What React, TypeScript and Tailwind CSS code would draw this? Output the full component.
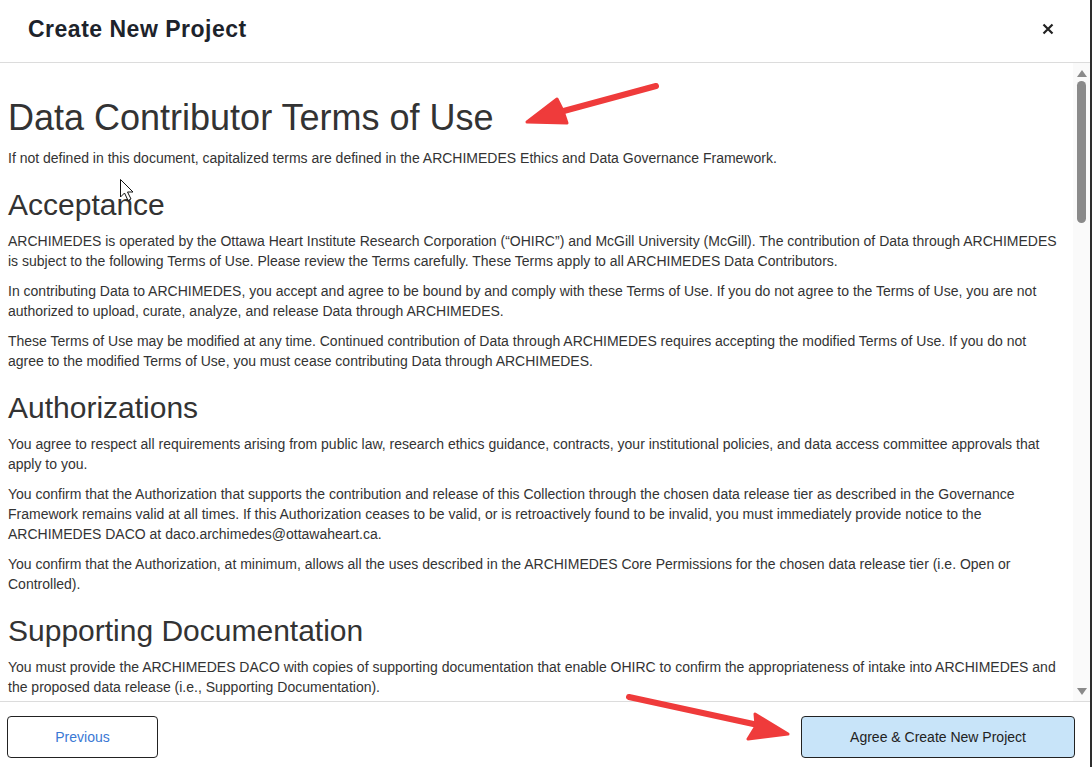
import React from "react";

const sections = [
  {
    title: "Acceptance",
    paragraphs: [
      "ARCHIMEDES is operated by the Ottawa Heart Institute Research Corporation (“OHIRC”) and McGill University (McGill). The contribution of Data through ARCHIMEDES is subject to the following Terms of Use. Please review the Terms carefully. These Terms apply to all ARCHIMEDES Data Contributors.",
      "In contributing Data to ARCHIMEDES, you accept and agree to be bound by and comply with these Terms of Use. If you do not agree to the Terms of Use, you are not authorized to upload, curate, analyze, and release Data through ARCHIMEDES.",
      "These Terms of Use may be modified at any time. Continued contribution of Data through ARCHIMEDES requires accepting the modified Terms of Use. If you do not agree to the modified Terms of Use, you must cease contributing Data through ARCHIMEDES.",
    ],
  },
  {
    title: "Authorizations",
    paragraphs: [
      "You agree to respect all requirements arising from public law, research ethics guidance, contracts, your institutional policies, and data access committee approvals that apply to you.",
      "You confirm that the Authorization that supports the contribution and release of this Collection through the chosen data release tier as described in the Governance Framework remains valid at all times. If this Authorization ceases to be valid, or is retroactively found to be invalid, you must immediately provide notice to the ARCHIMEDES DACO at daco.archimedes@ottawaheart.ca.",
      "You confirm that the Authorization, at minimum, allows all the uses described in the ARCHIMEDES Core Permissions for the chosen data release tier (i.e. Open or Controlled).",
    ],
  },
  {
    title: "Supporting Documentation",
    paragraphs: [
      "You must provide the ARCHIMEDES DACO with copies of supporting documentation that enable OHIRC to confirm the appropriateness of intake into ARCHIMEDES and the proposed data release (i.e., Supporting Documentation).",
    ],
  },
];

function Scrollbar() {
  return (
    <div className="w-[17px] shrink-0 bg-[#fafafa] flex flex-col items-center pt-[7px] pb-[6px]">
      <svg width="10" height="7" viewBox="0 0 10 7">
        <polygon points="5,0 10,7 0,7" fill="#8a8a8a" />
      </svg>
      <div className="mt-[4px] w-[9px] h-[142px] rounded-full bg-[#8a8a8a]" />
      <div className="flex-1" />
      <svg width="10" height="7" viewBox="0 0 10 7">
        <polygon points="0,0 10,0 5,7" fill="#8a8a8a" />
      </svg>
    </div>
  );
}

function Annotations() {
  return (
    <svg
      className="absolute inset-0 pointer-events-none"
      width="1092"
      height="767"
      viewBox="0 0 1092 767"
    >
      <g fill="#ef3b3b" stroke="#ef3b3b" strokeLinejoin="round" strokeLinecap="round">
        <line x1="656" y1="86" x2="560" y2="112" strokeWidth="6" />
        <polygon points="527,122 557,99 563,111 567,123" strokeWidth="3" />
        <line x1="629" y1="697" x2="758" y2="725" strokeWidth="6" />
        <polygon points="788,734 755,714 756,726 748,739" strokeWidth="3" />
      </g>
      <polygon
        points="120.5,179.5 120.5,197 124.5,193 128,200.5 131,199 127.5,192 133,192"
        fill="#fff"
        stroke="#111"
        strokeWidth="1"
        strokeLinejoin="round"
      />
    </svg>
  );
}

export default function App() {
  return (
    <div className="relative flex h-[767px] w-full bg-white text-[#333] font-['Liberation_Sans',Arial,sans-serif] overflow-hidden">
      <div className="flex-1 flex flex-col min-w-0">
        <div className="h-[63px] shrink-0 border-b border-[#dcdcdc] flex items-center justify-between pl-7 pr-9 pb-1">
          <h3 className="text-[23px] tracking-[0.5px] font-bold text-[#1d232b]">Create New Project</h3>
          <button className="text-[#222]">
            <svg width="12" height="12" viewBox="0 0 12 12">
              <path d="M1.5 1.5L10.5 10.5M10.5 1.5L1.5 10.5" stroke="#222" strokeWidth="2.2" />
            </svg>
          </button>
        </div>

        <div className="flex-1 flex min-h-0">
          <div className="flex-1 overflow-hidden px-2 pt-[15px] text-[14px] leading-[20px]">
            <h1 className="mt-5 mb-2.5 text-[36px] leading-[1.1]">Data Contributor Terms of Use</h1>
            <p className="mb-2.5">
              If not defined in this document, capitalized terms are defined in the ARCHIMEDES Ethics and Data Governance Framework.
            </p>
            {sections.map((s) => (
              <div key={s.title}>
                <h2 className="mt-5 mb-2.5 text-[30px] leading-[1.1]">{s.title}</h2>
                {s.paragraphs.map((p, i) => (
                  <p key={i} className="mb-2.5">
                    {p}
                  </p>
                ))}
              </div>
            ))}
          </div>
          <Scrollbar />
        </div>

        <div className="h-[66px] shrink-0 border-t border-[#dcdcdc] flex items-start justify-between pt-[14px] pl-[7px] pr-[15px] text-[14px]">
          <button className="w-[151px] h-[42px] rounded-[4px] border border-[#222] bg-white text-[#3a78d4]">
            Previous
          </button>
          <button className="w-[274px] h-[42px] rounded-[4px] border border-[#222] bg-[#c8e4f9] text-[#222]">
            Agree &amp; Create New Project
          </button>
        </div>
      </div>
      <div className="w-[2px] shrink-0 bg-[#2e2e2e]" />
      <Annotations />
    </div>
  );
}
